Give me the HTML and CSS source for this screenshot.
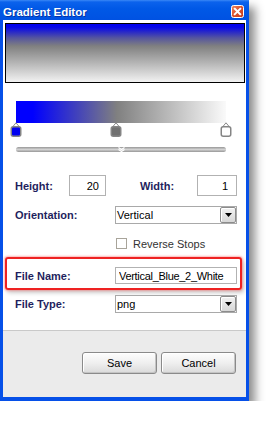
FILE: index.html
```html
<!DOCTYPE html>
<html>
<head>
<meta charset="utf-8">
<link rel="stylesheet" href="styles.css">
</head>
<body>
<div class="window">
  <div class="titlebar">
    <span class="title">Gradient Editor</span>
    <svg class="close" width="13" height="13" viewBox="0 0 13 13">
      <defs>
        <linearGradient id="cg" x1="0" y1="0" x2="1" y2="1">
          <stop offset="0" stop-color="#f08a62"/>
          <stop offset="0.5" stop-color="#d9502b"/>
          <stop offset="1" stop-color="#c23a1c"/>
        </linearGradient>
      </defs>
      <rect x="0.5" y="0.5" width="12" height="12" rx="2" fill="url(#cg)" stroke="#fff"/>
      <path d="M3.8 3.8 L9.2 9.2 M9.2 3.8 L3.8 9.2" stroke="#fff" stroke-width="2" stroke-linecap="square"/>
    </svg>
  </div>
  <div class="client">
    <div class="main">
      <div class="preview"></div>
      <div class="stops-area">
        <div class="gbar"></div>
        <div class="stops">
          <svg class="stop" style="left:0%" width="12" height="15" viewBox="0 0 12 15">
            <path d="M6 0.8 L9.5 5 L2.5 5 Z" fill="#fff" stroke="#8a8a8a"/>
            <rect x="1.25" y="4.75" width="9.5" height="9.5" rx="2" fill="#0000f0" stroke="#858585" stroke-width="1.5"/>
          </svg>
          <svg class="stop" style="left:47.8%" width="12" height="15" viewBox="0 0 12 15">
            <path d="M6 0.8 L9.5 5 L2.5 5 Z" fill="#fff" stroke="#8a8a8a"/>
            <rect x="1.25" y="4.75" width="9.5" height="9.5" rx="2" fill="#707070" stroke="#858585" stroke-width="1.5"/>
          </svg>
          <svg class="stop" style="left:100%" width="12" height="15" viewBox="0 0 12 15">
            <path d="M6 0.8 L9.5 5 L2.5 5 Z" fill="#fff" stroke="#8a8a8a"/>
            <rect x="1.25" y="4.75" width="9.5" height="9.5" rx="2" fill="#ffffff" stroke="#858585" stroke-width="1.5"/>
          </svg>
        </div>
        <div class="slider">
          <svg class="thumb" width="7" height="5" viewBox="0 0 7 5">
            <path d="M0.5 0.5 L3.5 2.5 L6.5 0.5 M0.5 2.5 L3.5 4.5 L6.5 2.5" fill="none" stroke="#fff" stroke-width="1.2"/>
          </svg>
        </div>
      </div>

      <div class="row dims">
        <span class="label lbl-h">Height:</span>
        <input class="inp inp-h" type="text" value="20">
        <span class="label lbl-w">Width:</span>
        <input class="inp inp-w" type="text" value="1">
      </div>

      <div class="row orient">
        <span class="label lbl-wide">Orientation:</span>
        <div class="select">
          <span class="sel-text">Vertical</span>
          <span class="dd"><svg width="7" height="4" viewBox="0 0 7 4"><path d="M0 0 H7 L3.5 4 Z" fill="#000"/></svg></span>
        </div>
      </div>

      <div class="check-row">
        <span class="cb"></span>
        <span class="cb-text">Reverse Stops</span>
      </div>

      <div class="fn-box">
        <span class="label lbl-wide">File Name:</span>
        <input class="inp inp-fn" type="text" value="Vertical_Blue_2_White">
      </div>

      <div class="row ftype">
        <span class="label lbl-wide">File Type:</span>
        <div class="select">
          <span class="sel-text">png</span>
          <span class="dd"><svg width="7" height="4" viewBox="0 0 7 4"><path d="M0 0 H7 L3.5 4 Z" fill="#000"/></svg></span>
        </div>
      </div>
    </div>
    <div class="footer">
      <button class="btn">Save</button>
      <button class="btn">Cancel</button>
    </div>
  </div>
</div>
</body>
</html>
```

FILE: styles.css
```css
* { box-sizing: border-box; }

body {
  margin: 0;
  background: #fff;
  font-family: "Liberation Sans", Arial, sans-serif;
  font-size: 11px;
}

.window {
  width: 249px;
  height: 401px;
  display: flex;
  flex-direction: column;
  background: #0550ea;
  box-shadow: 6px 7px 9px rgba(0, 0, 0, 0.45);
}

.titlebar {
  height: 20px;
  flex: none;
  display: flex;
  align-items: center;
  justify-content: space-between;
  padding: 3px 5px 0 3px;
  background: linear-gradient(#3a88f6 0, #0b62ec 2px, #0058e6 45%, #0052e2 100%);
}

.title {
  color: #fff;
  font-weight: bold;
  font-size: 11.5px;
  text-shadow: 1px 1px 0 rgba(10, 30, 120, 0.6);
}

.close { display: block; }

.client {
  flex: 1;
  display: flex;
  flex-direction: column;
  background: #fff;
  border-style: solid;
  border-color: #0650e8;
  border-width: 0 3px 4px 3px;
}

.main {
  flex: 1;
}

.preview {
  margin: 3px 0 0 2px;
  width: 240px;
  height: 60px;
  border: 1px solid #000;
  background: linear-gradient(#0000ee 0%, #0808e6 6%, #55559f 24%, #808080 38%, #a8a8a8 60%, #f2f2f2 100%);
}

.stops-area {
  margin: 18px 0 0 13px;
  width: 210px;
}

.gbar {
  height: 22px;
  background: linear-gradient(to right, #0000ff 0%, #0000ff 8%, #4545b8 30%, #808080 48%, #b8b8b8 72%, #fafafa 100%);
}

.stops {
  position: relative;
  height: 14px;
}

.stop {
  position: absolute;
  top: -1px;
  margin-left: -6px;
  display: block;
}

.slider {
  position: relative;
  margin-top: 10px;
  height: 5px;
  border-radius: 3px;
  background: linear-gradient(#979797, #d2d2d2 50%, #979797);
}

.thumb {
  position: absolute;
  left: 50%;
  top: 0;
  margin-left: -3px;
  display: block;
}

.row {
  display: flex;
  align-items: center;
  padding-left: 12px;
}

.label {
  font-weight: bold;
  color: #1f1f5e;
  font-size: 11px;
}

.dims {
  margin-top: 23px;
  height: 21px;
}

.lbl-h { width: 54px; flex: none; }
.lbl-w { width: 57px; flex: none; margin-left: 34px; }
.lbl-wide { width: 100px; flex: none; }

.inp {
  display: block;
  margin: 0;
  border: 1px solid #b2b2b2;
  background: #fff;
  font-family: "Liberation Sans", Arial, sans-serif;
  font-size: 11px;
  color: #000;
  outline: none;
}

.inp-h {
  width: 37px;
  height: 21px;
  text-align: right;
  padding: 0 6px 0 0;
}

.inp-w {
  width: 40px;
  height: 21px;
  text-align: right;
  padding: 0 8px 0 0;
}

.orient {
  margin-top: 10px;
  height: 18px;
}

.select {
  width: 122px;
  height: 18px;
  border: 1px solid #a9a9a9;
  background: #fff;
  display: flex;
  align-items: center;
  justify-content: space-between;
  padding-left: 1px;
}

.sel-text { color: #000; }

.dd {
  width: 16px;
  height: 16px;
  border: 1px solid #8c8c8c;
  border-radius: 2px;
  background: linear-gradient(#f2f2f2, #d6d6d6);
  box-shadow: inset 1px 1px 0 #fff;
  display: flex;
  align-items: center;
  justify-content: center;
}

.dd svg { display: block; }

.check-row {
  margin-top: 14px;
  height: 11px;
  padding-left: 113px;
  display: flex;
  align-items: center;
  gap: 6px;
}

.cb {
  width: 11px;
  height: 11px;
  border: 1px solid #a8a49a;
  background: #fff;
  flex: none;
}

.cb-text { color: #333; }

.fn-box {
  margin: 8px 0 0 2px;
  width: 237px;
  height: 33px;
  border: 2px solid #ee2222;
  border-radius: 3px;
  padding: 8px 0 4px 8px;
  display: flex;
  align-items: center;
  box-shadow: 0 0 2px 1px rgba(255, 90, 90, 0.45), 2px 3px 4px rgba(0, 0, 0, 0.2);
}

.inp-fn {
  width: 122px;
  height: 17px;
  padding: 0 0 0 3px;
  letter-spacing: -0.3px;
}

.ftype {
  margin-top: 5px;
  height: 18px;
}

.footer {
  height: 67px;
  flex: none;
  background: #ebebeb;
  border-top: 1px solid #c9c9c9;
  display: flex;
  justify-content: flex-end;
  align-items: flex-start;
  gap: 4px;
  padding: 21px 10px 0 0;
}

.btn {
  width: 75px;
  height: 22px;
  margin: 0;
  padding: 0;
  border: 1px solid #8a8a8a;
  border-radius: 3px;
  background: linear-gradient(#fdfdfd, #efefef 50%, #dadada);
  box-shadow: inset -1px -1px 0 #c4c4c4, inset 1px 1px 0 #fff;
  font-family: "Liberation Sans", Arial, sans-serif;
  font-size: 11px;
  color: #000;
}
```
